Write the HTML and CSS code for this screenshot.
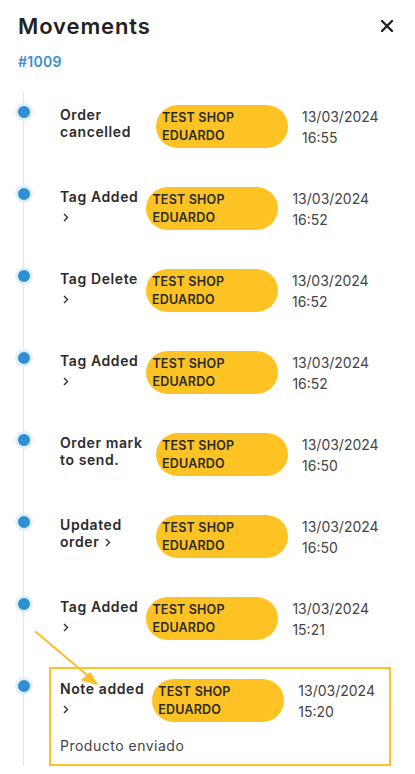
FILE: index.html
```html
<!DOCTYPE html>
<html lang="en">
<head>
    <meta charset="UTF-8">
    <meta name="viewport" content="width=device-width, initial-scale=1.0">
    <title>Movements</title>
    <link rel="stylesheet" href="styles.css">
</head>
<body>
    <div class="header">
        <h1>Movements</h1>
        <button class="close" aria-label="Close">
            <svg width="12" height="12" viewBox="0 0 12 12"><path d="M1 1L11 11M11 1L1 11" stroke="#222" stroke-width="2.4" stroke-linecap="round"/></svg>
        </button>
    </div>
    <div class="order-id">#1009</div>

    <div class="timeline">
        <div class="event">
            <span class="dot"></span>
            <div class="card">
                <div class="row">
                    <div class="title">Order cancelled</div>
                    <div class="pill">TEST SHOP EDUARDO</div>
                    <div class="date">13/03/2024<br>16:55</div>
                </div>
            </div>
        </div>
        <div class="event">
            <span class="dot"></span>
            <div class="card">
                <div class="row">
                    <div class="title">Tag Added<span class="chev block"><svg width="6" height="9" viewBox="0 0 6 9"><path d="M1 1l3.5 3.5L1 8" fill="none" stroke="#333" stroke-width="1.4"/></svg></span></div>
                    <div class="pill">TEST SHOP EDUARDO</div>
                    <div class="date">13/03/2024<br>16:52</div>
                </div>
            </div>
        </div>
        <div class="event">
            <span class="dot"></span>
            <div class="card">
                <div class="row">
                    <div class="title">Tag Delete<span class="chev block"><svg width="6" height="9" viewBox="0 0 6 9"><path d="M1 1l3.5 3.5L1 8" fill="none" stroke="#333" stroke-width="1.4"/></svg></span></div>
                    <div class="pill">TEST SHOP EDUARDO</div>
                    <div class="date">13/03/2024<br>16:52</div>
                </div>
            </div>
        </div>
        <div class="event">
            <span class="dot"></span>
            <div class="card">
                <div class="row">
                    <div class="title">Tag Added<span class="chev block"><svg width="6" height="9" viewBox="0 0 6 9"><path d="M1 1l3.5 3.5L1 8" fill="none" stroke="#333" stroke-width="1.4"/></svg></span></div>
                    <div class="pill">TEST SHOP EDUARDO</div>
                    <div class="date">13/03/2024<br>16:52</div>
                </div>
            </div>
        </div>
        <div class="event">
            <span class="dot"></span>
            <div class="card">
                <div class="row">
                    <div class="title">Order mark to send.</div>
                    <div class="pill">TEST SHOP EDUARDO</div>
                    <div class="date">13/03/2024<br>16:50</div>
                </div>
            </div>
        </div>
        <div class="event">
            <span class="dot"></span>
            <div class="card">
                <div class="row">
                    <div class="title">Updated order <span class="chev"><svg width="6" height="9" viewBox="0 0 6 9"><path d="M1 1l3.5 3.5L1 8" fill="none" stroke="#333" stroke-width="1.4"/></svg></span></div>
                    <div class="pill">TEST SHOP EDUARDO</div>
                    <div class="date">13/03/2024<br>16:50</div>
                </div>
            </div>
        </div>
        <div class="event">
            <span class="dot"></span>
            <div class="card">
                <div class="row">
                    <div class="title">Tag Added<span class="chev block"><svg width="6" height="9" viewBox="0 0 6 9"><path d="M1 1l3.5 3.5L1 8" fill="none" stroke="#333" stroke-width="1.4"/></svg></span></div>
                    <div class="pill">TEST SHOP EDUARDO</div>
                    <div class="date">13/03/2024<br>15:21</div>
                </div>
            </div>
        </div>
        <div class="event">
            <span class="dot"></span>
            <div class="card highlight">
                <div class="row">
                    <div class="title">Note added<span class="chev block"><svg width="6" height="9" viewBox="0 0 6 9"><path d="M1 1l3.5 3.5L1 8" fill="none" stroke="#333" stroke-width="1.4"/></svg></span></div>
                    <div class="pill">TEST SHOP EDUARDO</div>
                    <div class="date">13/03/2024<br>15:20</div>
                </div>
                <div class="note">Producto enviado</div>
            </div>
        </div>
    </div>

    <!-- annotation arrow pointing at the highlighted note -->
    <svg class="arrow" width="80" height="70" viewBox="0 0 80 70">
        <path d="M6 7L64 56" stroke="#fbc02d" stroke-width="2.2" stroke-linecap="round"/>
        <path d="M67 59L52 55L60 48Z" fill="#fbc02d" stroke="#fbc02d" stroke-width="1.5" stroke-linejoin="round"/>
    </svg>
</body>
</html>
```

FILE: styles.css
```css
body {
    font-family: Inter, "DejaVu Sans", sans-serif;
    background-color: #fff;
    color: #2b2b2b;
    margin: 0;
    padding: 0;
    position: relative;
}

.header {
    display: flex;
    justify-content: space-between;
    align-items: center;
    padding: 10px 22px 0 18px;
}

h1 {
    margin: 0;
    font-size: 22px;
    font-weight: 600;
    line-height: 32px;
    letter-spacing: 0.9px;
    color: #222;
}

.close {
    border: none;
    background: none;
    padding: 0;
    width: 12px;
    height: 12px;
    cursor: pointer;
    display: flex;
}

.order-id {
    padding: 10px 18px 0;
    font-size: 14px;
    font-weight: 600;
    line-height: 20px;
    letter-spacing: 0.3px;
    color: #3a8fd0;
}

.timeline {
    position: relative;
    padding: 21px 0 0 15px;
}

.timeline::before {
    content: "";
    position: absolute;
    left: 23px;
    top: 20px;
    bottom: 0;
    width: 1px;
    background-color: #e2e6ee;
}

.event {
    display: flex;
    align-items: flex-start;
    margin-bottom: 15px;
    min-height: 67px;
}

.dot {
    position: relative;
    flex: 0 0 auto;
    width: 12px;
    height: 12px;
    margin-top: 10px;
    border-radius: 50%;
    background-color: #2e8fd4;
    border: 3px solid #e0eef9;
}

.card {
    flex: 1;
    margin-left: 16px;
    margin-right: 24px;
    padding: 10px 9px;
    border: 2px solid transparent;
}

.card.highlight {
    border-color: #fcc329;
    padding-bottom: 8px;
}

.row {
    display: flex;
    align-items: flex-start;
}

.title {
    flex: 0 0 auto;
    max-width: 88px;
    margin-top: 1px;
    margin-right: 8px;
    font-size: 14px;
    font-weight: 600;
    line-height: 17px;
    letter-spacing: 0.6px;
    color: #2b2b2b;
}

.chev {
    display: inline-block;
    padding-left: 2px;
}

.chev.block {
    display: block;
    padding: 3px 0 0 3px;
}

.pill {
    flex: 0 0 auto;
    width: 120px;
    padding: 4px 6px 3px;
    border-radius: 22px;
    background-color: #fdc324;
    font-size: 12.5px;
    font-weight: 600;
    line-height: 18px;
    letter-spacing: 0.2px;
    color: #2b2b2b;
}

.date {
    margin-left: 14px;
    margin-top: 1px;
    font-size: 14px;
    line-height: 21px;
    color: #444;
}

.note {
    margin-top: 14px;
    font-size: 14px;
    line-height: 20px;
    letter-spacing: 0.5px;
    color: #444;
}

.arrow {
    position: absolute;
    left: 30px;
    top: 625px;
}
```
